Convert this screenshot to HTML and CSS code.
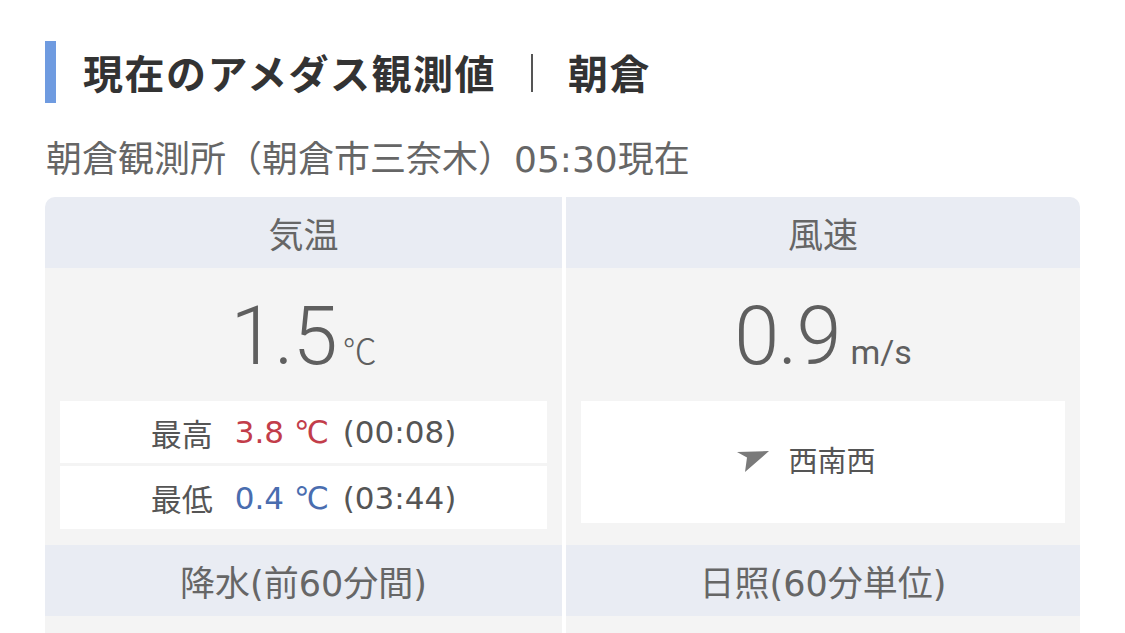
FILE: index.html
```html
<!DOCTYPE html>
<html lang="ja">
<head>
<meta charset="utf-8">
<title>現在のアメダス観測値</title>
<link rel="stylesheet" href="styles.css">
</head>
<body>
<main class="page">
  <h1 class="heading"><span>現在のアメダス観測値</span><span class="sep" aria-label="｜"></span><span>朝倉</span></h1>
  <p class="sub">朝倉観測所（朝倉市三奈木）05:30現在</p>
  <div class="card">
    <div class="head">気温</div>
    <div class="head">風速</div>

    <div class="cell">
      <div class="big"><span class="num">1.5</span><span class="unit unit-c">℃</span></div>
      <div class="extremes">
        <div class="ext-row"><span class="lab">最高</span><span class="hi">3.8 ℃</span><span class="time">(00:08)</span></div>
        <div class="ext-row"><span class="lab">最低</span><span class="lo">0.4 ℃</span><span class="time">(03:44)</span></div>
      </div>
    </div>
    <div class="cell">
      <div class="big"><span class="num">0.9</span><span class="unit">m/s</span></div>
      <div class="wind">
        <svg class="arrow" width="34" height="24" viewBox="0 0 34 24"><polygon points="1,3 33,2 9,23 11,8.5" fill="#7a7a7a"/></svg>
        <span>西南西</span>
      </div>
    </div>

    <div class="head">降水(前60分間)</div>
    <div class="head">日照(60分単位)</div>
    <div class="cell cell-low"></div>
    <div class="cell cell-low"></div>
  </div>
</main>
</body>
</html>
```

FILE: styles.css
```css
html, body {
  margin: 0;
  padding: 0;
  background: #ffffff;
}
body {
  font-family: "DejaVu Sans", "Noto Sans CJK JP", sans-serif;
  color: #555555;
}
.page {
  padding-left: 45px;
  width: 1035px;
}
.heading {
  margin: 41px 0 0 0;
  height: 62px;
  display: flex;
  align-items: center;
  border-left: 11px solid #6f9be0;
  padding-left: 27px;
  font-family: "Noto Sans CJK JP", sans-serif;
  font-size: 40px;
  font-weight: 700;
  color: #333333;
  letter-spacing: 1.5px;
}
.sep {
  display: block;
  width: 0;
  height: 38px;
  border-left: 2px solid #555555;
  margin: 2px 35px 0 35px;
}
.sub {
  margin: 37px 0 0 1px;
  height: 40px;
  line-height: 40px;
  font-size: 36px;
  color: #666666;
  font-family: "DejaVu Sans", "Noto Sans CJK JP", sans-serif;
  font-weight: 400;
}
.card {
  margin-top: 17px;
  display: grid;
  grid-template-columns: 517px 514px;
  column-gap: 4px;
  border-radius: 10px 10px 0 0;
  overflow: hidden;
}
.head {
  height: 71px;
  background: #e9ecf3;
  display: flex;
  align-items: center;
  justify-content: center;
  font-size: 35px;
  color: #666666;
}
.cell {
  background: #f4f4f4;
  padding: 0 15px 16px 15px;
  display: flex;
  flex-direction: column;
  align-items: stretch;
}
.cell-low {
  height: 60px;
  padding: 0;
}
.big {
  height: 133px;
  display: flex;
  align-items: baseline;
  justify-content: center;
  line-height: 1;
  padding-top: 28px;
  box-sizing: border-box;
  color: #5f5f5f;
}
.num {
  font-family: "Roboto", "Liberation Sans", sans-serif;
  font-weight: 300;
  font-size: 81px;
  letter-spacing: -1px;
}
.unit {
  font-family: "Roboto", "Liberation Sans", sans-serif;
  font-weight: 400;
  font-size: 34px;
  margin-left: 10px;
}
.unit-c {
  font-family: "Noto Sans CJK JP", sans-serif;
  font-weight: 300;
  margin-left: 6px;
}
.extremes {
  display: flex;
  flex-direction: column;
  gap: 3px;
}
.ext-row {
  height: 62px;
  background: #ffffff;
  display: flex;
  align-items: center;
  justify-content: center;
  font-size: 31px;
  color: #555555;
}
.ext-row:last-child {
  height: 63px;
}
.lab {
  margin-right: 22px;
  font-family: "Noto Sans CJK JP", sans-serif;
}
.hi {
  color: #c23d4a;
  margin-right: 14px;
}
.lo {
  color: #4a6daf;
  margin-right: 14px;
}
.wind {
  height: 122px;
  background: #ffffff;
  display: flex;
  align-items: center;
  justify-content: center;
  font-size: 29px;
  color: #555555;
  gap: 18px;
  padding: 0 34px 6px 0;
  box-sizing: border-box;
  font-family: "Noto Sans CJK JP", sans-serif;
}
.arrow {
  margin-top: 4px;
}
```
